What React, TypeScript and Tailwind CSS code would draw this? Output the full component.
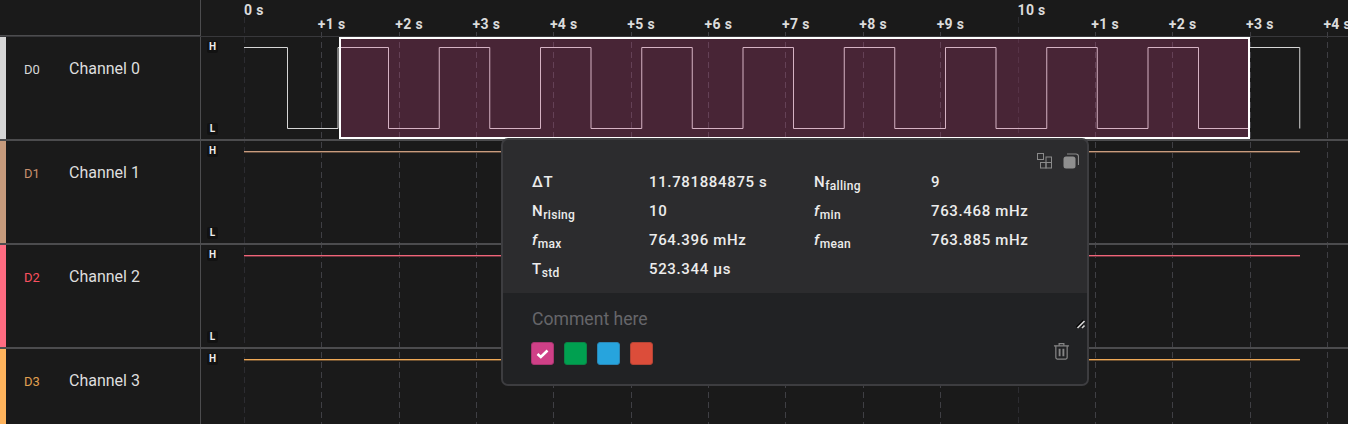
import React from "react";

const GRID = Array.from({ length: 15 }, (_, i) => 244 + 77.35 * i);
const TICKS = ["0 s", "+1 s", "+2 s", "+3 s", "+4 s", "+5 s", "+6 s", "+7 s", "+8 s", "+9 s", "10 s", "+1 s", "+2 s", "+3 s", "+4 s"];

function wavePath() {
  let d = "M44 10.5 L87.5 10.5 L87.5 91.5";
  let x = 87.5;
  for (let i = 0; i < 10; i++) {
    const rise = 138 + 101.25 * i;
    const fall = 188.5 + 101.25 * i;
    d += ` L${rise} 91.5 L${rise} 10.5 L${fall} 10.5 L${fall} 91.5`;
    x = fall;
  }
  return d + ` L${x} 91.5`;
}

const channels = [
  { id: "D0", name: "Channel 0", strip: "bg-[#d6d6d6]", text: "text-[#d8d8d8]", line: "" },
  { id: "D1", name: "Channel 1", strip: "bg-[#c69a7c]", text: "text-[#c8906e]", line: "bg-[#c99c7e] border-[#5f4a3c]" },
  { id: "D2", name: "Channel 2", strip: "bg-[#ff6b81]", text: "text-[#f9505f]", line: "bg-[#ef6579] border-[#6e343d]" },
  { id: "D3", name: "Channel 3", strip: "bg-[#ffb35c]", text: "text-[#e0a050]", line: "bg-[#efa957] border-[#6e5130]" },
];

function Level({ c }: { c: string }) {
  return (
    <span className="flex h-[12px] w-[11px] items-center justify-center rounded-[2px] bg-[#121212] text-[10px] font-bold leading-none text-[#ececec]">
      {c}
    </span>
  );
}

function Row({ ch, index, last }: { ch: (typeof channels)[number]; index: number; last: boolean }) {
  return (
    <div className="relative flex h-[104px] border-b-2 border-[#4c4c4e]">
      <div className={`w-[6px] shrink-0 ${ch.strip}`} />
      <div className="flex w-[195px] shrink-0 items-start border-r border-[#4c4c4e] pl-[18px] pt-[22px]">
        <span className="w-[45px] pt-[2px] leading-[16px]">
          <span className={`text-[13px] ${ch.text}`}>{ch.id}</span>
        </span>
        <span className="text-[16px] font-normal leading-[20px] text-[#dedede]">{ch.name}</span>
      </div>
      <div className="relative flex-1">
        <div className="flex h-full flex-col justify-between pb-[4px] pl-[6px] pt-[4px]">
          <Level c="H" />
          {!last && <Level c="L" />}
        </div>
        {index === 0 ? (
          <svg className="absolute left-[-1px] top-0 h-[102px] w-[1147px]" viewBox="0 0 1147 102" fill="none">
            <path d={wavePath()} stroke="#d6d6d6" strokeWidth="1" />
          </svg>
        ) : (
          <div className={`absolute left-[43px] top-[10px] box-content h-px w-[1056px] border-b ${ch.line}`} />
        )}
      </div>
    </div>
  );
}

function Stat({ label, sub, italic, value }: { label: string; sub?: string; italic?: boolean; value: string }) {
  return (
    <>
      <div className="h-[29px] whitespace-nowrap text-[15px] font-medium leading-[29px] tracking-[0.65px] text-[#ececec]">
        {italic ? <i>{label}</i> : label}
        {sub && <span className="relative top-[3px] text-[12px] leading-none tracking-[0.3px]">{sub}</span>}
      </div>
      <div className="h-[29px] whitespace-nowrap text-[15px] font-medium leading-[29px] tracking-[0.65px] text-[#ececec]">{value}</div>
    </>
  );
}

function Popup() {
  const swatches = ["bg-[#cf4087] border-[#a93570]", "bg-[#00a050] border-[#0a8446]", "bg-[#27a4dd] border-[#2a86b5]", "bg-[#dc4d3a] border-[#b34435]"];
  return (
    <div className="absolute left-[501px] top-[138px] flex h-[248px] w-[588px] flex-col overflow-hidden rounded-[7px] border-2 border-[#3d3d40] bg-[#2c2c2e]">
      <div className="relative h-[153px] shrink-0 pl-[29px] pt-[28px]">
        <div className="absolute right-[8px] top-[13px] flex items-center gap-[10px]">
          <svg width="16" height="16" viewBox="0 0 16 16" fill="none" stroke="#8a8a8a" strokeWidth="1">
            <rect x="0.5" y="0.5" width="6" height="6" />
            <rect x="3.5" y="9.5" width="5.5" height="5.5" />
            <rect x="9" y="9.5" width="5.5" height="5.5" />
            <rect x="9" y="4" width="5.5" height="5.5" />
          </svg>
          <svg width="16" height="16" viewBox="0 0 16 16" fill="none">
            <path d="M4 1 H13 A2.5 2.5 0 0 1 15.5 3.5 V12" stroke="#8a8a8a" strokeWidth="1.2" />
            <rect x="0.5" y="3.5" width="12" height="12" rx="2.5" fill="#8f8f8f" />
          </svg>
        </div>
        <div className="grid grid-cols-[117px_165px_117px_1fr]">
          <Stat label="ΔT" value="11.781884875 s" />
          <Stat label="N" sub="falling" value="9" />
          <Stat label="N" sub="rising" value="10" />
          <Stat label="f" italic sub="min" value="763.468 mHz" />
          <Stat label="f" italic sub="max" value="764.396 mHz" />
          <Stat label="f" italic sub="mean" value="763.885 mHz" />
          <Stat label="T" sub="std" value="523.344 µs" />
        </div>
      </div>
      <div className="relative flex-1 bg-[#212224] pl-[29px] pt-[14px]">
        <textarea
          placeholder="Comment here"
          className="block h-[23px] w-[552px] resize-none bg-transparent text-[17.6px] leading-[24px] text-[#e6e6e6] outline-none placeholder:text-[#66666a]"
        />
        <svg className="absolute left-[573px] top-[26px]" width="10" height="10" viewBox="0 0 10 10" fill="none">
          <path d="M0.5 8 L7.5 1 M5.5 8 L7.5 6" stroke="#000000" strokeWidth="1.4" />
          <path d="M1.5 9 L8.5 2 M6 9 L8.5 6.5" stroke="#d0d0d0" strokeWidth="1.7" />
        </svg>
        <div className="-ml-px mt-[12px] flex items-center gap-[10px]">
          {swatches.map((s, i) => (
            <div key={i} className={`flex h-[23px] w-[23px] items-center justify-center rounded-[3px] border ${s}`}>
              {i === 0 && (
                <svg width="13" height="10" viewBox="0 0 13 10" fill="none">
                  <path d="M1.5 5 L4.8 8 L11.5 1.5" stroke="#ffffff" strokeWidth="2.6" />
                </svg>
              )}
            </div>
          ))}
        </div>
        <svg className="absolute bottom-[24px] right-[17px]" width="17" height="18" viewBox="0 0 18 19" fill="none" stroke="#858585" strokeWidth="1.3">
          <path d="M1 4 H17" />
          <path d="M6.5 4 V1.7 H11.5 V4" />
          <path d="M3 4 V16.5 A1.5 1.5 0 0 0 4.5 18 H13.5 A1.5 1.5 0 0 0 15 16.5 V4" />
          <path d="M7 7 V15 M11 7 V15" strokeWidth="2" />
        </svg>
      </div>
    </div>
  );
}

export default function App() {
  return (
    <div className="relative h-[424px] w-[1348px] overflow-hidden bg-[#1a1a1a] font-['Roboto',sans-serif]">
      <svg className="absolute left-0 top-0 h-[424px] w-[1348px]" viewBox="0 0 1348 424" fill="none">
        {GRID.map((x, i) => (
          <line
            key={i}
            x1={Math.round(x) + 0.5}
            x2={Math.round(x) + 0.5}
            y1={i === 0 || i === 10 ? 17 : 32}
            y2={424}
            stroke={i === 0 || i === 10 ? "#2c2c31" : "#3f3f44"}
            strokeDasharray="6 4"
          />
        ))}
      </svg>
      <div className="relative flex h-[37px] border-b border-[#38383b]">
        <div className="w-[201px] shrink-0 border-r border-b border-[#4c4c4e]" />
        <div className="flex-1" />
      </div>
      {TICKS.map((t, i) => (
        <span
          key={i}
          className={`absolute whitespace-nowrap text-[14px] font-bold leading-[14px] tracking-[0.35px] text-[#dcdcdc] ${i === 0 || i === 10 ? "top-[3px]" : "top-[17px]"}`}
          style={{ left: GRID[i] + (i === 0 || i === 10 ? 0 : -3.5) }}
        >
          {t}
        </span>
      ))}
      <div className="relative">
        {channels.map((ch, i) => (
          <Row key={ch.id} ch={ch} index={i} last={i === channels.length - 1} />
        ))}
      </div>
      <div className="absolute left-[339px] top-[37px] h-[102px] w-[911px] border-2 border-white bg-[#d2468a]/25" />
      <Popup />
    </div>
  );
}
